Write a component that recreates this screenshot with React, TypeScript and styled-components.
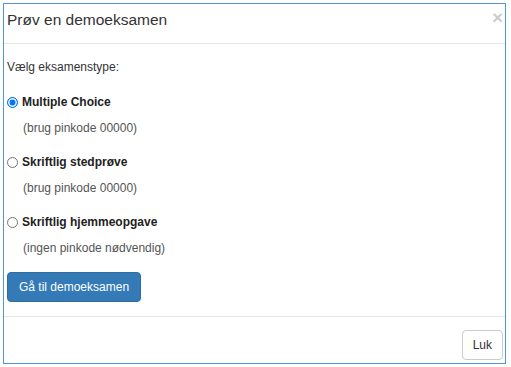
import styled, { createGlobalStyle } from "styled-components";

const GlobalStyle = createGlobalStyle`
  body {
    margin: 0;
    background: #fff;
    font-family: "Liberation Sans", Arial, sans-serif;
    color: #333;
  }
`;

const Modal = styled.div`
  box-sizing: border-box;
  margin: 3px;
  width: 503px;
  height: 361px;
  border: 1px solid #4f95dd;
  display: flex;
  flex-direction: column;
  background: #fff;
`;

const Header = styled.div`
  box-sizing: border-box;
  height: 40px;
  padding: 0 2px 0 3px;
  border-bottom: 1px solid #e5e5e5;
  display: flex;
  justify-content: space-between;
  align-items: flex-start;
`;

const Title = styled.h4`
  margin: 7px 0 0;
  font-size: 15.5px;
  line-height: 17px;
  font-weight: normal;
  color: #333;
`;

const Close = styled.button`
  margin-top: 5px;
  padding: 0;
  border: 0;
  background: transparent;
  font-family: "Liberation Sans", Arial, sans-serif;
  font-size: 19px;
  line-height: 18px;
  font-weight: bold;
  color: #000;
  opacity: 0.2;
  cursor: pointer;
`;

const Body = styled.div`
  flex: 1;
  padding: 15px 2px 0 3px;
  display: flex;
  flex-direction: column;
  font-size: 12px;
  line-height: 17px;
`;

const Options = styled.div`
  margin-top: 18px;
  display: flex;
  flex-direction: column;
  gap: 17px;
`;

const Option = styled.div`
  display: flex;
  flex-direction: column;
  gap: 9px;
`;

const Label = styled.label`
  display: flex;
  align-items: center;
  gap: 4px;
  font-weight: bold;
  color: #222;
`;

const Radio = styled.input`
  appearance: none;
  box-sizing: border-box;
  margin: 0;
  width: 11px;
  height: 11px;
  border: 1px solid #767676;
  border-radius: 50%;
  background: #fff;

  &:checked {
    border-color: #0075ff;
    background: #0075ff;
    box-shadow: inset 0 0 0 1.5px #fff;
  }
`;

const Hint = styled.div`
  padding-left: 16px;
  color: #555;
`;

const PrimaryButton = styled.button`
  align-self: flex-start;
  margin-top: 15px;
  height: 30px;
  padding: 0 11px;
  border: 1px solid #2e6da4;
  border-radius: 4px;
  background: #337ab7;
  color: #fff;
  font-family: "Liberation Sans", Arial, sans-serif;
  font-size: 12px;
`;

const Footer = styled.div`
  box-sizing: border-box;
  height: 47px;
  padding: 13px 2px 0 3px;
  border-top: 1px solid #e5e5e5;
  display: flex;
  justify-content: flex-end;
  align-items: flex-start;
`;

const DefaultButton = styled.button`
  height: 30px;
  padding: 0 10px;
  border: 1px solid #ccc;
  border-radius: 4px;
  background: #fff;
  color: #333;
  font-family: "Liberation Sans", Arial, sans-serif;
  font-size: 12px;
`;

const examTypes = [
  { id: "mc", label: "Multiple Choice", hint: "(brug pinkode 00000)" },
  { id: "sted", label: "Skriftlig stedprøve", hint: "(brug pinkode 00000)" },
  { id: "hjemme", label: "Skriftlig hjemmeopgave", hint: "(ingen pinkode nødvendig)" },
];

export default function App() {
  return (
    <>
      <GlobalStyle />
      <Modal>
        <Header>
          <Title>Prøv en demoeksamen</Title>
          <Close>×</Close>
        </Header>
        <Body>
          <div>Vælg eksamenstype:</div>
          <Options>
            {examTypes.map((t, i) => (
              <Option key={t.id}>
                <Label>
                  <Radio type="radio" name="type" defaultChecked={i === 0} />
                  {t.label}
                </Label>
                <Hint>{t.hint}</Hint>
              </Option>
            ))}
          </Options>
          <PrimaryButton>Gå til demoeksamen</PrimaryButton>
        </Body>
        <Footer>
          <DefaultButton>Luk</DefaultButton>
        </Footer>
      </Modal>
    </>
  );
}
